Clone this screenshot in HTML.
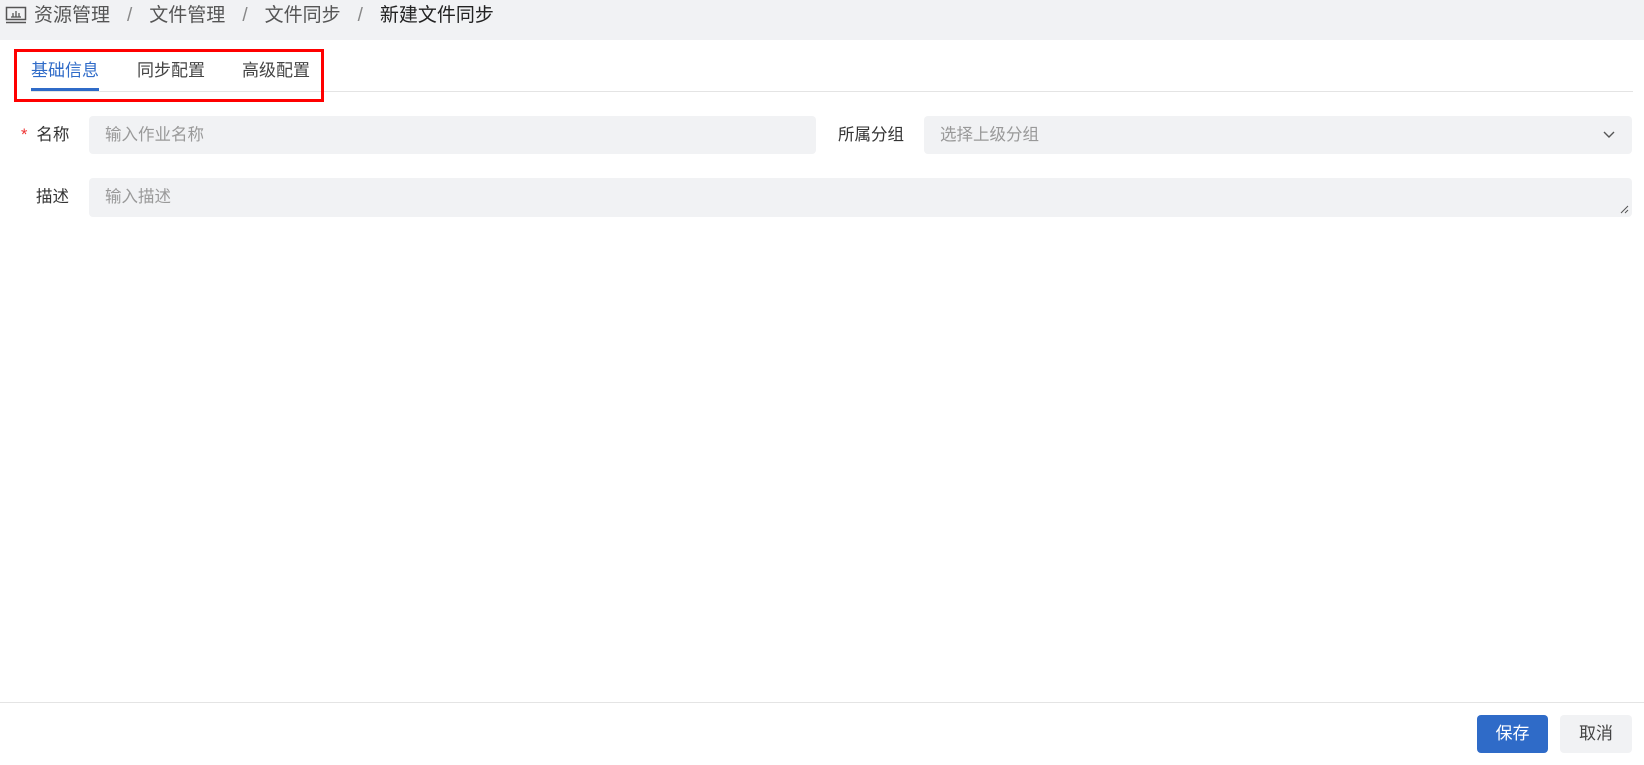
<!DOCTYPE html>
<html><head><meta charset="utf-8"><style>
*{margin:0;padding:0;box-sizing:border-box}
body{width:1644px;height:765px;background:#fff;font-family:"Liberation Sans","Noto Sans CJK SC",sans-serif;position:relative;overflow:hidden;color:#333}
.hd{position:absolute;left:0;top:0;width:1644px;height:40px;background:#f1f2f4}
.bc{position:absolute;top:4px;left:34px;font-size:19px;line-height:24px;color:#555;white-space:nowrap}
.bc .s{color:#888;margin:0 17px}
.bc .c{color:#222}
.ab{position:absolute}
.red{position:absolute;left:14px;top:49px;width:310px;height:53px;border:3px solid #f00}
.tab{position:absolute;top:59px;font-size:17px;line-height:24px;color:#444}
.inp{position:absolute;background:#f1f2f4;border-radius:4px;font-size:16.5px;color:#999;padding-left:16px;line-height:38px}
.lab{position:absolute;font-size:16.5px;color:#333;line-height:38px}
.btn{position:absolute;top:715px;height:38px;border-radius:4px;font-size:17px;line-height:38px;text-align:center}
</style></head><body>
<div class="hd"></div>
<svg class="ab" style="left:5px;top:6px" width="22" height="18" viewBox="0 0 22 18"><rect x="1.5" y="1.5" width="19" height="12" fill="none" stroke="#555" stroke-width="1.5"/><line x1="1" y1="16.5" x2="21" y2="16.5" stroke="#555" stroke-width="1.5"/><path d="M6 11h10M8 11V7M11 11V5M14 11V7" stroke="#555" stroke-width="1.3"/></svg>
<div class="bc">资源管理<span class="s">/</span>文件管理<span class="s">/</span>文件同步<span class="s">/</span><span class="c">新建文件同步</span></div>
<div class="ab" style="left:31px;top:91px;width:1602px;height:1px;background:#e4e4e4"></div>
<div class="tab" style="left:31px;color:#2f6bc8">基础信息</div>
<div class="tab" style="left:137px">同步配置</div>
<div class="tab" style="left:242px">高级配置</div>
<div class="ab" style="left:31px;top:88px;width:68px;height:3px;background:#2f6bc8"></div>
<div class="red"></div>
<div class="lab" style="left:21px;top:116px"><span style="color:#e33;margin-right:9px">*</span>名称</div>
<div class="inp" style="left:89px;top:116px;width:727px;height:38px">输入作业名称</div>
<div class="lab" style="left:838px;top:116px">所属分组</div>
<div class="inp" style="left:924px;top:116px;width:708px;height:38px">选择上级分组
<svg style="position:absolute;right:16px;top:14px" width="14" height="10" viewBox="0 0 14 10"><path d="M2 2l5 5 5-5" fill="none" stroke="#555" stroke-width="1.4"/></svg></div>
<div class="lab" style="left:36px;top:178px">描述</div>
<div class="inp" style="left:89px;top:178px;width:1543px;height:39px">输入描述
<svg style="position:absolute;right:3px;bottom:3px" width="10" height="10" viewBox="0 0 10 10"><path d="M9 2L2 9M9 6L6 9" stroke="#555" stroke-width="1"/></svg></div>
<div class="ab" style="left:0;top:702px;width:1644px;height:1px;background:#e4e4e4"></div>
<div class="btn" style="left:1477px;width:71px;background:#2f6bc8;color:#fff">保存</div>
<div class="btn" style="left:1560px;width:72px;background:#f1f2f4;color:#444">取消</div>
</body></html>
